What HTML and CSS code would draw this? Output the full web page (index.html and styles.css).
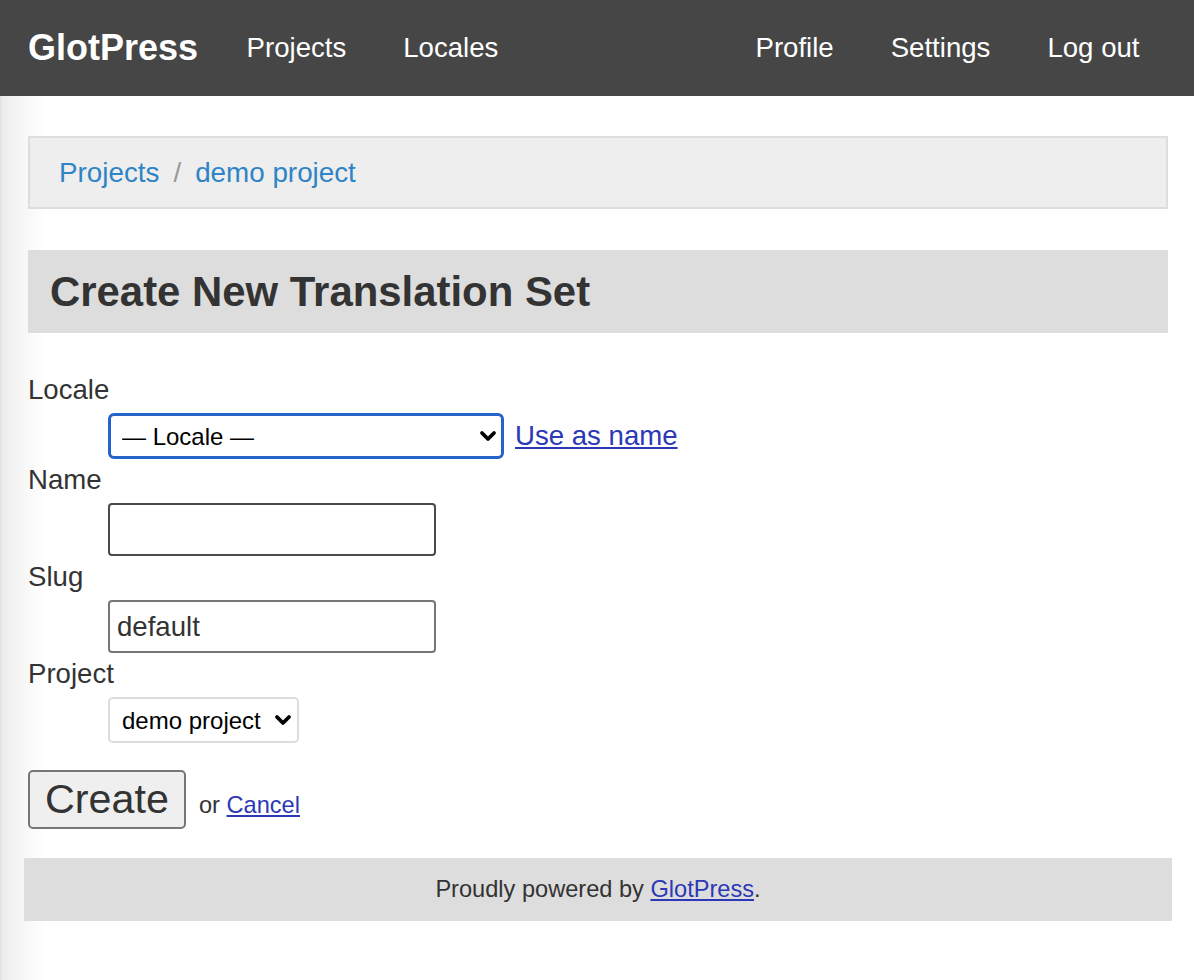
FILE: index.html
```html
<!DOCTYPE html>
<html lang="en">
<head>
<meta charset="utf-8">
<title>Create New Translation Set &lt; GlotPress</title>
<link rel="stylesheet" href="styles.css">
</head>
<body>
<header class="topbar">
  <a class="logo" href="#">GlotPress</a>
  <nav class="nav-main">
    <a class="nav-link" href="#">Projects</a>
    <a class="nav-link" href="#">Locales</a>
  </nav>
  <nav class="nav-user">
    <a class="nav-link" href="#">Profile</a>
    <a class="nav-link" href="#">Settings</a>
    <a class="nav-link" href="#">Log out</a>
  </nav>
</header>

<main class="page">
  <div class="breadcrumb">
    <a class="crumb" href="#">Projects</a>
    <span class="crumb-sep">/</span>
    <a class="crumb" href="#">demo project</a>
  </div>

  <h2 class="page-title">Create New Translation Set</h2>

  <form class="set-form">
    <div class="field">
      <label class="lbl" for="locale">Locale</label>
      <div class="ctl ctl-row">
        <span class="select-wrap select-focus">
          <select id="locale" class="sel sel-locale">
            <option>— Locale —</option>
          </select>
          <svg class="chev" width="18" height="12" viewBox="0 0 18 12"><path d="M3 3 L9 9 L15 3" fill="none" stroke="#000" stroke-width="3.8" stroke-linecap="round" stroke-linejoin="round"/></svg>
        </span>
        <a class="plain-link use-name" href="#">Use as name</a>
      </div>
    </div>

    <div class="field">
      <label class="lbl" for="name">Name</label>
      <div class="ctl">
        <input id="name" class="txt txt-dark" type="text" value="">
      </div>
    </div>

    <div class="field">
      <label class="lbl" for="slug">Slug</label>
      <div class="ctl">
        <input id="slug" class="txt" type="text" value="default">
      </div>
    </div>

    <div class="field">
      <label class="lbl" for="project">Project</label>
      <div class="ctl">
        <span class="select-wrap">
          <select id="project" class="sel sel-project">
            <option>demo project</option>
          </select>
          <svg class="chev" width="18" height="12" viewBox="0 0 18 12"><path d="M3 3 L9 9 L15 3" fill="none" stroke="#000" stroke-width="3.8" stroke-linecap="round" stroke-linejoin="round"/></svg>
        </span>
      </div>
    </div>

    <div class="actions">
      <button type="button" class="btn">Create</button>
      <span class="or">or <a class="plain-link" href="#">Cancel</a></span>
    </div>
  </form>

  <footer class="foot">
    <p class="foot-text">Proudly powered by <a class="plain-link" href="#">GlotPress</a>.</p>
  </footer>
</main>
</body>
</html>
```

FILE: styles.css
```css
* { box-sizing: border-box; }

html { min-height: 100%; }

body {
  margin: 0;
  min-height: 980px;
  font-family: "Liberation Sans", Arial, Helvetica, sans-serif;
  color: #333;
  background: linear-gradient(to right, #dedede 0, #ececec 2px, #f2f2f2 12px, #fbfbfb 34px, #fff 46px);
}

/* Header */
.topbar {
  display: flex;
  align-items: center;
  height: 96px;
  padding: 0 26px 0 28px;
  background: #464646;
}

.logo {
  color: #fff;
  font-weight: bold;
  font-size: 36px;
  text-decoration: none;
  margin-right: 20px;
}

.nav-main, .nav-user {
  display: flex;
}

.nav-user { margin-left: auto; }

.nav-link {
  color: #fff;
  font-size: 27.6px;
  text-decoration: none;
  padding: 0 28.5px;
}

/* Main */
.page {
  padding: 40px 26px 0 28px;
}

.breadcrumb {
  display: flex;
  align-items: center;
  height: 73px;
  padding: 0 29px;
  background: #eee;
  border: 2px solid #ddd;
  font-size: 27.8px;
}

.crumb {
  color: #2f84c6;
  text-decoration: none;
}

.crumb-sep {
  color: #999;
  padding: 0 14px 0 14px;
}

.page-title {
  margin: 41px 0 0 0;
  height: 83px;
  display: flex;
  align-items: center;
  padding-left: 22px;
  background: #ddd;
  color: #333;
  font-size: 41.9px;
  font-weight: bold;
}

/* Form */
.set-form {
  margin-top: 41px;
}

.lbl {
  display: block;
  font-size: 27.6px;
  line-height: 32px;
  color: #333;
}

.ctl {
  margin: 7px 0 5px 80px;
}

.ctl-row {
  display: flex;
  align-items: center;
}

.select-wrap {
  position: relative;
  display: inline-flex;
}

.sel {
  appearance: none;
  -webkit-appearance: none;
  font-family: "Liberation Sans", Arial, Helvetica, sans-serif;
  font-size: 24px;
  color: #000;
  background: #fff;
  height: 46px;
  min-height: 46px;
  margin: 0;
}

.sel-locale {
  width: 396px;
  border: 3px solid #2563c9;
  border-radius: 6px;
  padding: 0 40px 0 11px;
  outline: none;
}

.sel-project {
  width: 191px;
  border: 2px solid #dcdcdc;
  border-radius: 5px;
  padding: 0 36px 0 12px;
}

.chev {
  position: absolute;
  right: 7px;
  top: 17px;
  pointer-events: none;
}

.use-name {
  margin-left: 11px;
  font-size: 27.6px;
}

.plain-link {
  color: #2c38b6;
  text-decoration: underline;
}

.txt {
  display: block;
  width: 328px;
  height: 53px;
  min-height: 53px;
  padding: 0 7px;
  font-family: "Liberation Sans", Arial, Helvetica, sans-serif;
  font-size: 27.6px;
  color: #333;
  background: #fff;
  border: 2px solid #767676;
  border-radius: 4px;
  margin: 0;
}

.txt-dark { border-color: #4a4a4a; }

.actions {
  margin-top: 27px;
  display: flex;
  align-items: baseline;
}

.btn {
  height: 59px;
  padding: 0 15px;
  font-family: "Liberation Sans", Arial, Helvetica, sans-serif;
  font-size: 41.3px;
  color: #333;
  background: #efefef;
  border: 2px solid #767676;
  border-radius: 5px;
  margin: 0;
}

.or {
  margin-left: 13px;
  font-size: 23.6px;
  color: #333;
}

/* Footer */
.foot {
  margin: 29px -4px 0 -4px;
  height: 63px;
  background: #ddd;
  display: flex;
  align-items: center;
  justify-content: center;
}

.foot-text {
  margin: 0;
  font-size: 23.6px;
  color: #333;
}
```
